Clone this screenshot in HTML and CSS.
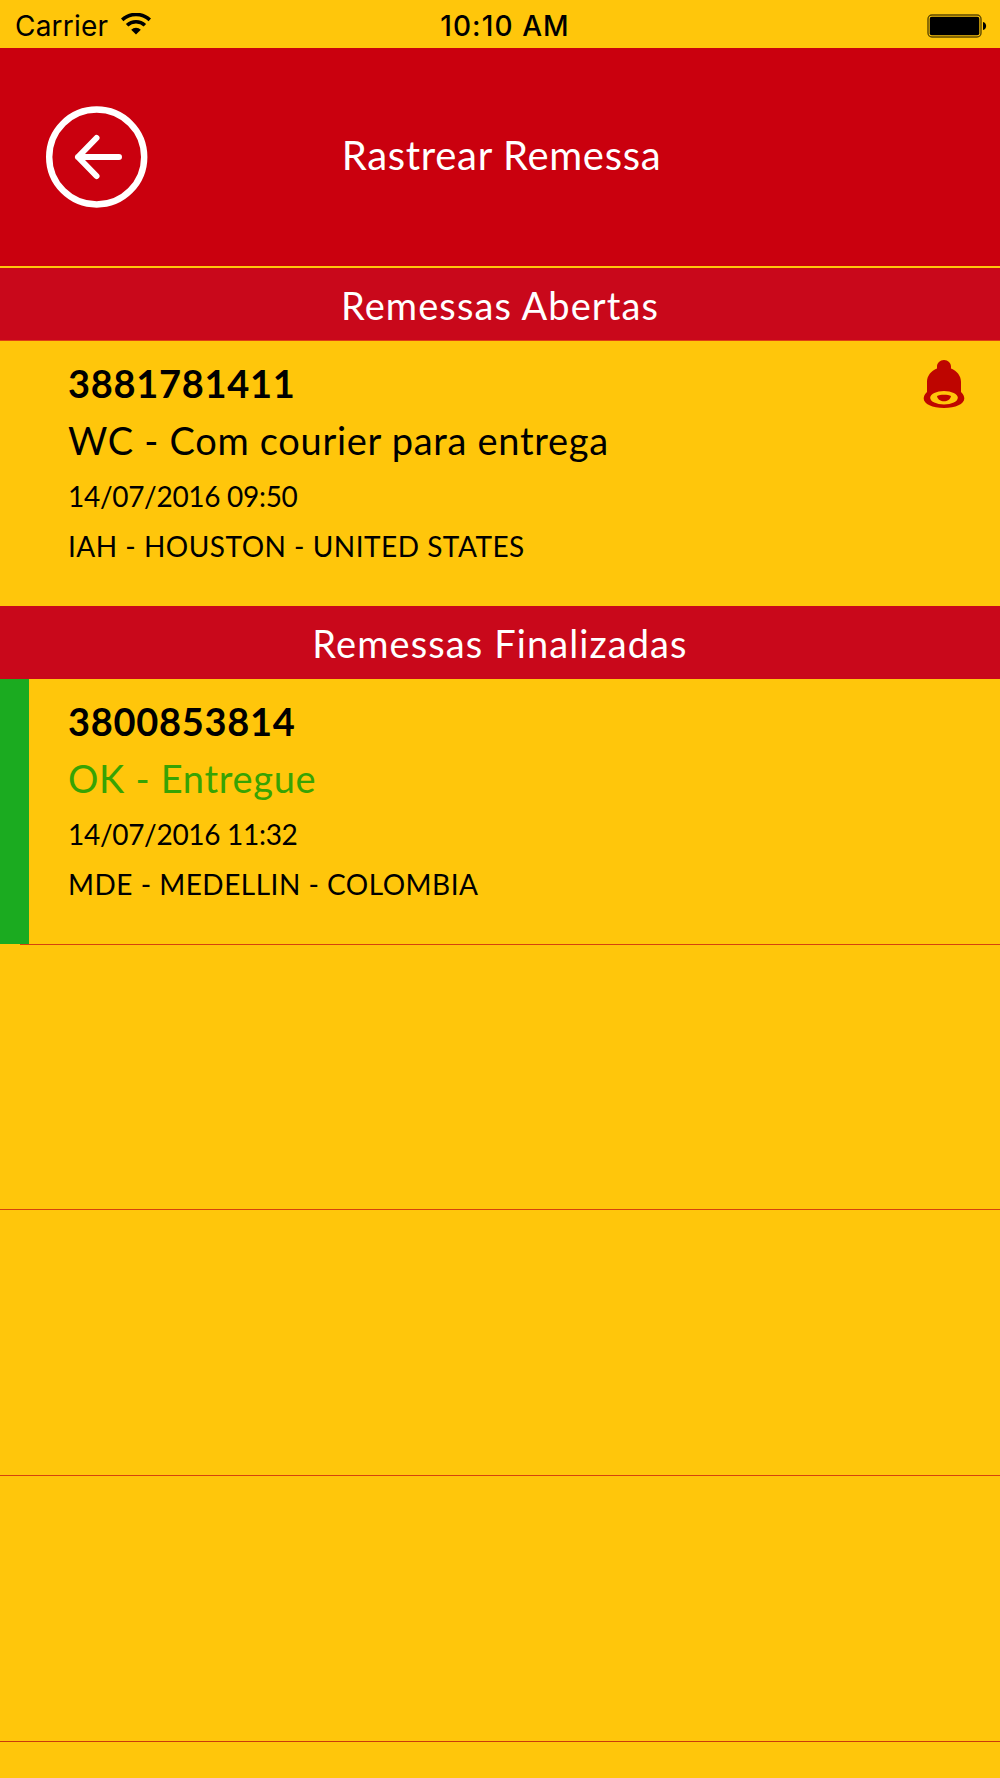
FILE: index.html
```
<!DOCTYPE html>
<html lang="pt">
<head>
    <meta charset="UTF-8">
    <meta name="viewport" content="width=device-width, initial-scale=1.0">
    <title>Rastrear Remessa</title>
    <link rel="stylesheet" href="styles.css">
</head>
<body>
    <div class="status-bar">
        <div class="carrier">
            <span class="carrier-name">Carrier</span>
            <svg class="wifi" width="30" height="22" viewBox="0 0 30 22">
                <path d="M1.2 6.8 A20.5 20.5 0 0 1 28.8 6.8" fill="none" stroke="#000" stroke-width="3.6"/>
                <path d="M6.1 12.2 A13 13 0 0 1 23.9 12.2" fill="none" stroke="#000" stroke-width="3.6"/>
                <path d="M10.2 16.8 A6.8 6.8 0 0 1 19.8 16.8 L15 21.6 Z" fill="#000"/>
            </svg>
        </div>
        <span class="clock">10:10 AM</span>
        <div class="battery-side">
            <svg width="60" height="24" viewBox="0 0 60 24">
                <rect x="1" y="1" width="53" height="22" rx="4" fill="none" stroke="#5d4800" stroke-width="1.4"/>
                <rect x="2.7" y="2.7" width="49.6" height="18.6" rx="2" fill="#000"/>
                <path d="M56 8 C60.2 9 60.2 15 56 16 Z" fill="#000"/>
            </svg>
        </div>
    </div>

    <header class="header">
        <a class="back" href="#">
            <svg width="102" height="102" viewBox="0 0 102 102" fill="none" stroke="#fff" stroke-linecap="round" stroke-linejoin="round">
                <circle cx="50.7" cy="51" r="47.5" stroke-width="6.4"/>
                <path d="M73 51 H32 M50.5 32 L32 51 L50.5 70" stroke-width="6"/>
            </svg>
        </a>
        <h1>Rastrear Remessa</h1>
    </header>

    <h2 class="section first">Remessas Abertas</h2>
    <div class="row open">
        <div class="info">
            <p class="number">3881781411</p>
            <p class="state">WC - Com courier para entrega</p>
            <p class="date">14/07/2016 09:50</p>
            <p class="place">IAH - HOUSTON - UNITED STATES</p>
        </div>
        <svg class="bell" width="42" height="49" viewBox="0 0 42 49">
            <path d="M21 0 C25 0 28 3 28 6.5 V8.6 C34 11 38 16 38 22 V32 C40 34 41.3 36 41.3 38.5 C41.3 44 32.5 48 21 48 C9.5 48 .7 44 .7 38.5 C.7 36 2 34 4 32 V22 C4 16 8 11 14 8.6 V6.5 C14 3 17 0 21 0 Z" fill="#be0500"/>
            <ellipse cx="21" cy="37.8" rx="13.8" ry="6.8" fill="#ffc60b"/>
            <path d="M14 36 C17 34.3 25 34.3 28 36 C27 43 15 43 14 36 Z" fill="#be0500"/>
        </svg>
    </div>

    <h2 class="section">Remessas Finalizadas</h2>
    <div class="row done">
        <div class="info">
            <p class="number">3800853814</p>
            <p class="state">OK - Entregue</p>
            <p class="date">14/07/2016 11:32</p>
            <p class="place">MDE - MEDELLIN - COLOMBIA</p>
        </div>
    </div>
    <div class="row empty first-empty"></div>
    <div class="row empty"></div>
    <div class="row empty"></div>
    <div class="last-line"></div>
</body>
</html>
```

FILE: styles.css
```
* {
    box-sizing: border-box;
}

body {
    margin: 0;
    height: 1778px;
    overflow: hidden;
    background-color: #ffc60b;
    font-family: Lato, sans-serif;
    color: #000;
}

h1, h2, p {
    margin: 0;
    font-weight: 400;
    white-space: nowrap;
}

.status-bar {
    display: grid;
    grid-template-columns: 1fr auto 1fr;
    height: 48px;
    padding: 2px 14px 0 15px;
    align-items: center;
    font-family: Inter, sans-serif;
    font-size: 28px;
}

.carrier {
    display: flex;
    align-items: center;
    gap: 13px;
}

.carrier-name {
    padding-top: 1px;
    letter-spacing: 0.2px;
}

.wifi {
    margin-top: -2px;
}

.clock {
    padding: 1px 0 0 9px;
    font-weight: 500;
    letter-spacing: 1.1px;
}

.battery-side {
    display: flex;
    justify-content: flex-end;
}

.battery-side svg {
    margin: 1px -1px 0 0;
}

.header {
    display: grid;
    grid-template-columns: 200px 1fr 200px;
    align-items: center;
    height: 218px;
    background-color: #ca000e;
    color: #fff;
}

.back {
    display: block;
    height: 102px;
    padding-left: 46px;
}

.header h1 {
    padding: 0 0 4px 3px;
    font-size: 40px;
    line-height: 48px;
    letter-spacing: 0.7px;
    text-align: center;
}

.section {
    height: 73px;
    padding-top: 1px;
    background-color: #c9081b;
    color: #fff;
    font-size: 38px;
    line-height: 73px;
    letter-spacing: 1.1px;
    text-align: center;
}

.section.first {
    margin-top: 2px;
    height: 72px;
}

.row {
    display: flex;
    justify-content: space-between;
    height: 266px;
}

.open {
    border-top: 1px solid #e04013;
    padding-right: 35px;
}

.info {
    padding: 17px 0 0 68px;
}

.done {
    height: 265px;
    border-left: 29px solid #1bab20;
}

.done .info {
    padding-left: 39px;
}

.number {
    font-size: 38px;
    line-height: 50px;
    font-weight: 700;
    letter-spacing: 0.7px;
}

.state {
    padding-top: 2px;
    font-size: 38px;
    line-height: 61px;
    letter-spacing: 0.7px;
}

.done .state {
    color: #37a303;
}

.date {
    font-size: 28px;
    line-height: 50px;
    letter-spacing: -0.3px;
}

.place {
    font-size: 28px;
    line-height: 51px;
    letter-spacing: 0.5px;
}

.bell {
    margin-top: 19px;
}

.empty {
    border-top: 1px solid #d5420e;
}

/* separator inset after a filled row */
.first-empty {
    height: 265px;
    margin-left: 20px;
}

.last-line {
    height: 1px;
    background-color: #c93a0b;
}
```
